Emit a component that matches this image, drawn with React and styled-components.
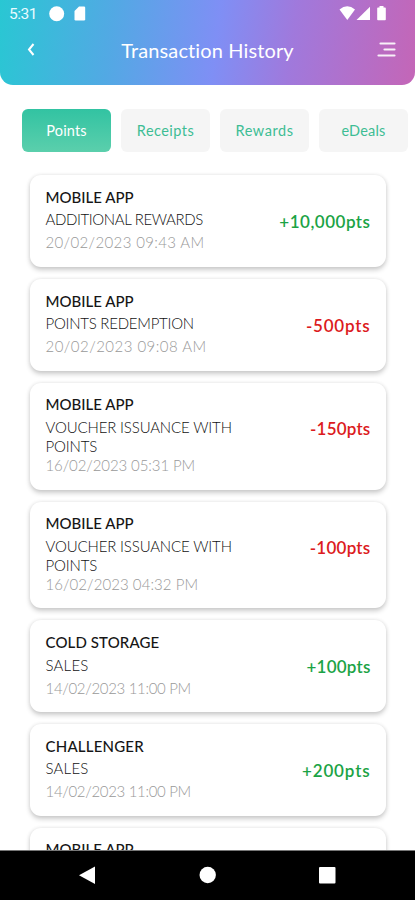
import React from "react";
import styled, { createGlobalStyle } from "styled-components";

const GlobalStyle = createGlobalStyle`
  * {
    box-sizing: border-box;
  }
  body {
    margin: 0;
    background: #fff;
    font-family: Lato, "Liberation Sans", sans-serif;
    overflow: hidden;
  }
`;

// styles screen
const Screen = styled.div`
  display: flex;
  flex-direction: column;
  width: 415px;
  height: 900px;
  overflow: hidden;
  background: #fff;
`;

const Header = styled.header`
  flex: none;
  height: 84.5px;
  border-radius: 0 0 13px 13px;
  color: #fff;
  background: linear-gradient(
    97deg,
    #29c7d3 0%,
    #52a9e4 27%,
    #7f8ff5 52%,
    #a079dc 70%,
    #c466b7 100%
  );
`;

const StatusBar = styled.div`
  display: flex;
  align-items: center;
  height: 28px;
  padding: 0 28px 0 9px;
`;

const Clock = styled.span`
  width: 40px;
  font-family: Roboto, sans-serif;
  font-size: 15.5px;
  letter-spacing: -0.5px;
  color: #e9fbff;
`;

const StatusIcons = styled.svg`
  display: block;
  margin-left: ${(props) => (props.$end ? "auto" : "0")};
  fill: #fff;
`;

const TitleBar = styled.div`
  display: grid;
  grid-template-columns: 60px 1fr 60px;
  align-items: center;
  height: 44px;

  h1 {
    margin: 0;
    text-align: center;
    font-size: 20px;
    font-weight: 400;
    line-height: 24px;
    letter-spacing: 0.12px;
    white-space: nowrap;
  }
  svg {
    display: block;
    fill: none;
    stroke: #fff;
  }
`;

const BackIcon = styled.svg`
  margin-left: 25px;
  stroke-width: 2;
`;

const MenuIcon = styled.svg`
  margin-left: 19px;
  stroke-width: 2.2;
  stroke-linecap: round;
  opacity: 0.9;
`;

// styles tabs
const Tabs = styled.nav`
  flex: none;
  display: flex;
  gap: 10px;
  padding: 24.5px 0 0 22px;
`;

const Tab = styled.button`
  width: 89px;
  height: 42.5px;
  padding: 1px 0 0;
  border: 0;
  border-radius: 6px;
  font-family: inherit;
  font-size: 14.5px;
  letter-spacing: ${(props) => props.$tracking || 0}px;
  color: ${(props) => (props.$active ? "#fff" : "#3dbd94")};
  background: ${(props) =>
    props.$active ? "linear-gradient(#32c3a2, #5bcfac)" : "#f5f5f5"};
`;

// styles transactions
const List = styled.main`
  flex: 1;
  min-height: 0;
  display: flex;
  flex-direction: column;
  gap: 12px;
  padding: 23.8px 29px 0 30px;
  overflow: hidden;
`;

const Card = styled.article`
  flex: none;
  display: flex;
  justify-content: space-between;
  padding: 12.5px 15.5px 14.7px;
  border-radius: 11px;
  background: #fff;
  box-shadow: 0 2.5px 5px rgba(0, 0, 0, 0.2), 0 0 4px rgba(0, 0, 0, 0.06);
`;

const Info = styled.div`
  width: 205px;
`;

const Merchant = styled.h2`
  margin: 0 0 4.6px;
  font-size: 15px;
  font-weight: 500;
  line-height: 18px;
  letter-spacing: ${(props) => props.$tracking || 0}px;
  color: #161616;
  white-space: nowrap;
`;

const Description = styled.p`
  margin: 0;
  min-height: 23px;
  font-size: 15px;
  font-weight: 300;
  line-height: 19px;
  letter-spacing: ${(props) => props.$tracking || 0}px;
  color: #111;
`;

const DateText = styled.p`
  margin: 0;
  font-size: 15px;
  font-weight: 300;
  line-height: 19px;
  letter-spacing: ${(props) => props.$tracking || 0}px;
  color: #999;
  white-space: nowrap;
`;

const Amount = styled.strong`
  margin-top: 23px;
  font-size: 17px;
  font-weight: 600;
  line-height: 22px;
  letter-spacing: ${(props) => props.$tracking || 0}px;
  color: ${(props) => (props.$negative ? "#dc1a20" : "#1ba345")};
`;

const NavBar = styled.footer`
  flex: none;
  height: 50px;
  border-top: 1px solid #777;
  background: #000;

  svg {
    display: block;
    fill: #fff;
  }
`;

const tabs = [
  { label: "Points", tracking: 0.15 },
  { label: "Receipts", tracking: 0.45 },
  { label: "Rewards", tracking: 0.55 },
  { label: "eDeals", tracking: 0.2 },
];

// tracking: merchant, description, date, amount
const transactions = [
  {
    merchant: "MOBILE APP",
    description: "ADDITIONAL REWARDS",
    date: "20/02/2023 09:43 AM",
    amount: "+10,000pts",
    tracking: [0, -0.38, 0.36, 0.5],
  },
  {
    merchant: "MOBILE APP",
    description: "POINTS REDEMPTION",
    date: "20/02/2023 09:08 AM",
    amount: "-500pts",
    tracking: [0, -0.24, 0.47, 0.8],
  },
  {
    merchant: "MOBILE APP",
    description: "VOUCHER ISSUANCE WITH POINTS",
    date: "16/02/2023 05:31 PM",
    amount: "-150pts",
    tracking: [0, -0.14, -0.1, 0.2],
  },
  {
    merchant: "MOBILE APP",
    description: "VOUCHER ISSUANCE WITH POINTS",
    date: "16/02/2023 04:32 PM",
    amount: "-100pts",
    tracking: [0, -0.14, 0.06, 0.25],
  },
  {
    merchant: "COLD STORAGE",
    description: "SALES",
    date: "14/02/2023 11:00 PM",
    amount: "+100pts",
    tracking: [0.12, 0.2, -0.32, 0.2],
  },
  {
    merchant: "CHALLENGER",
    description: "SALES",
    date: "14/02/2023 11:00 PM",
    amount: "+200pts",
    tracking: [0.2, 0.2, -0.32, 0.85],
  },
  { merchant: "MOBILE APP" },
];

const Transaction = ({ item }) => {
  const [merchantGap, descriptionGap, dateGap, amountGap] = item.tracking || [];
  return (
    <Card>
      <Info>
        <Merchant $tracking={merchantGap}>{item.merchant}</Merchant>
        {item.description && (
          <Description $tracking={descriptionGap}>
            {item.description}
          </Description>
        )}
        {item.date && <DateText $tracking={dateGap}>{item.date}</DateText>}
      </Info>
      {item.amount && (
        <Amount $negative={item.amount.startsWith("-")} $tracking={amountGap}>
          {item.amount}
        </Amount>
      )}
    </Card>
  );
};

const App = () => {
  return (
    <Screen>
      <GlobalStyle />
      <Header>
        <StatusBar>
          <Clock>5:31</Clock>
          <StatusIcons width="40" height="18" viewBox="0 0 40 18">
            <circle cx="7.7" cy="8.7" r="7.5" />
            <path d="M30 1.500h5q1.200 0 1.200 1.200v11.600q0 1.200-1.200 1.200H26.700q-1.200 0-1.200-1.200V6z" />
          </StatusIcons>
          <StatusIcons $end width="48" height="18" viewBox="0 0 48 18">
            <path d="M0.500 4.500Q8.300-2 16 4.500L8.300 15z" />
            <path d="M31 1.700V15H17.500z" />
            <path d="M40.500 2.500V1h4v1.500h1.500q0.800 0 0.800 0.800v11.200q0 0.800-0.800 0.800h-7q-0.800 0-0.800-0.800V3.300q0-0.800 0.800-0.800z" />
          </StatusIcons>
        </StatusBar>
        <TitleBar>
          <BackIcon width="12" height="14" viewBox="0 0 12 14">
            <path d="M8.500 1 4 6.500 8.500 12" />
          </BackIcon>
          <h1>Transaction History</h1>
          <MenuIcon width="24" height="18" viewBox="0 0 24 18">
            <path d="M6.500 2.500H20.500M10.500 8.500H20.500M4.500 14.500H20.500" />
          </MenuIcon>
        </TitleBar>
      </Header>
      <Tabs>
        {tabs.map((tab, i) => (
          <Tab key={tab.label} $active={i === 0} $tracking={tab.tracking}>
            {tab.label}
          </Tab>
        ))}
      </Tabs>
      <List>
        {transactions.map((item, i) => (
          <Transaction key={i} item={item} />
        ))}
      </List>
      <NavBar>
        <svg width="415" height="48" viewBox="0 0 415 48">
          <path d="M95 15.500V33L79 24.200z" />
          <circle cx="207.700" cy="24" r="8.200" />
          <rect x="319" y="16" width="16.500" height="16.500" rx="1" />
        </svg>
      </NavBar>
    </Screen>
  );
};

export default App;
